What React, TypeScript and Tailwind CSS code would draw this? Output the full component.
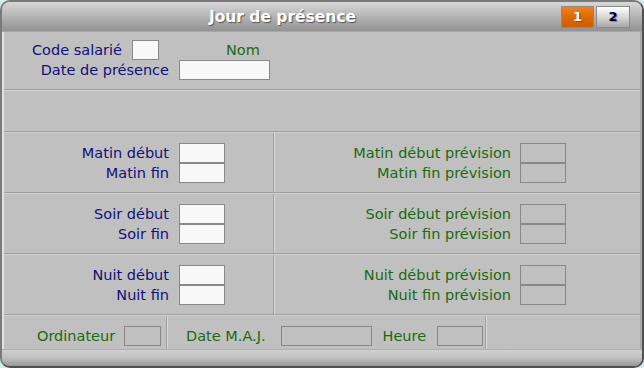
export default function App() {
  return (
    <div className="w-[644px] h-[368px] bg-[#d4ecec] font-['DejaVu_Sans',Verdana,sans-serif] text-[14.5px] leading-[20px]">
      <div className="w-full h-full flex flex-col rounded-[10px] border-2 border-[#505050] border-t-[#7a7a7a] border-l-[#7a7a7a] overflow-hidden bg-[#c0c0c0]">
        <TitleBar />
        <div className="flex-1 flex flex-col border-l-2 border-r-2 border-l-[#e0e0e0] border-r-[#a8a8a8]">
          <TopSection />
          <Sep />
          <div className="h-[40px]" />
          <Sep />
          <ShiftRow label="Matin" />
          <Sep />
          <ShiftRow label="Soir" />
          <Sep />
          <ShiftRow label="Nuit" />
          <Sep />
          <FooterRow />
        </div>
        <div className="h-[17px] bg-gradient-to-b from-[#d0d0d0] via-[#c0c0c0] to-[#989898] border-t border-[#b0b0b0]" />
      </div>
    </div>
  );
}

function TitleBar() {
  return (
    <div className="h-[30px] flex items-center bg-gradient-to-b from-[#d8d8d8] to-[#929292] border-b border-[#a8a8a8]">
      <div className="flex-1 text-center pl-[2px] text-white font-bold text-[15.5px] [text-shadow:1px_1px_1px_#555]">
        Jour de présence
      </div>
      <div className="flex mr-[12px] gap-[2px]">
        <div className="w-[33px] h-[22px] flex items-center justify-center border border-[#8a8a8a] bg-gradient-to-b from-[#f08020] via-[#e06a00] to-[#d05c00] text-white font-bold text-[13px] [text-shadow:1px_1px_0_#555]">
          1
        </div>
        <div className="w-[34px] h-[22px] flex items-center justify-center border border-[#8a8a8a] bg-gradient-to-b from-[#ffffff] via-[#d8d8d8] to-[#a8a8a8] text-black font-bold text-[13px] [text-shadow:1px_1px_0_#8080ff]">
          2
        </div>
      </div>
    </div>
  );
}

function Sep() {
  return <div className="h-[2px] border-t border-[#a0a0a0] bg-[#d0d0d0] shrink-0" />;
}

function TopSection() {
  return (
    <div className="h-[57px] pt-[8px] flex flex-col">
      <div className="flex items-center h-[20px]">
        <div className="w-[118px] text-right text-[#10107a] whitespace-nowrap">Code salarié</div>
        <div className="ml-[10px] w-[27px] h-[20px] bg-[#f8f8f8] border border-[#888888]" />
        <div className="ml-[67px] text-[#1a6a10]">Nom</div>
      </div>
      <div className="flex items-center h-[20px]">
        <div className="w-[165px] text-right text-[#10107a] whitespace-nowrap">Date de présence</div>
        <div className="ml-[10px] w-[91px] h-[20px] bg-[#f8f8f8] border border-[#888888]" />
      </div>
    </div>
  );
}

function ShiftRow(props: { label: string }) {
  const { label } = props;
  return (
    <div className="h-[59px] flex">
      <div className="w-[270px] pt-[10px] flex flex-col border-r border-[#a0a0a0]">
        <div className="flex items-center h-[20px]">
          <div className="w-[165px] text-right text-[#10107a] whitespace-nowrap">{label} début</div>
          <div className="ml-[10px] w-[46px] h-[20px] bg-[#f8f8f8] border border-[#888888]" />
        </div>
        <div className="flex items-center h-[20px]">
          <div className="w-[165px] text-right text-[#10107a] whitespace-nowrap">{label} fin</div>
          <div className="ml-[10px] w-[46px] h-[20px] bg-[#f8f8f8] border border-[#888888]" />
        </div>
      </div>
      <div className="flex-1 pt-[10px] flex flex-col border-l border-[#d8d8d8]">
        <div className="flex items-center h-[20px]">
          <div className="w-[236px] text-right text-[#1a6a10] whitespace-nowrap">{label} début prévision</div>
          <div className="ml-[9px] w-[46px] h-[20px] border border-[#888888]" />
        </div>
        <div className="flex items-center h-[20px]">
          <div className="w-[236px] text-right text-[#1a6a10] whitespace-nowrap">{label} fin prévision</div>
          <div className="ml-[9px] w-[46px] h-[20px] border border-[#888888]" />
        </div>
      </div>
    </div>
  );
}

function FooterRow() {
  return (
    <div className="flex-1 flex">
      <div className="w-[163px] flex items-center pt-[6px] border-r border-[#a0a0a0]">
        <div className="ml-[33px] text-[#1a6a10]">Ordinateur</div>
        <div className="ml-[9px] w-[37px] h-[20px] border border-[#888888]" />
      </div>
      <div className="w-[319px] flex items-center pt-[6px] border-l border-r border-l-[#d8d8d8] border-r-[#a0a0a0]">
        <div className="ml-[18px] text-[#1a6a10] whitespace-nowrap">Date M.A.J.</div>
        <div className="ml-[15px] w-[91px] h-[20px] border border-[#888888]" />
        <div className="ml-[11px] text-[#1a6a10]">Heure</div>
        <div className="ml-[11px] w-[46px] h-[20px] border border-[#888888]" />
      </div>
      <div className="flex-1 border-l border-[#d8d8d8]" />
    </div>
  );
}
